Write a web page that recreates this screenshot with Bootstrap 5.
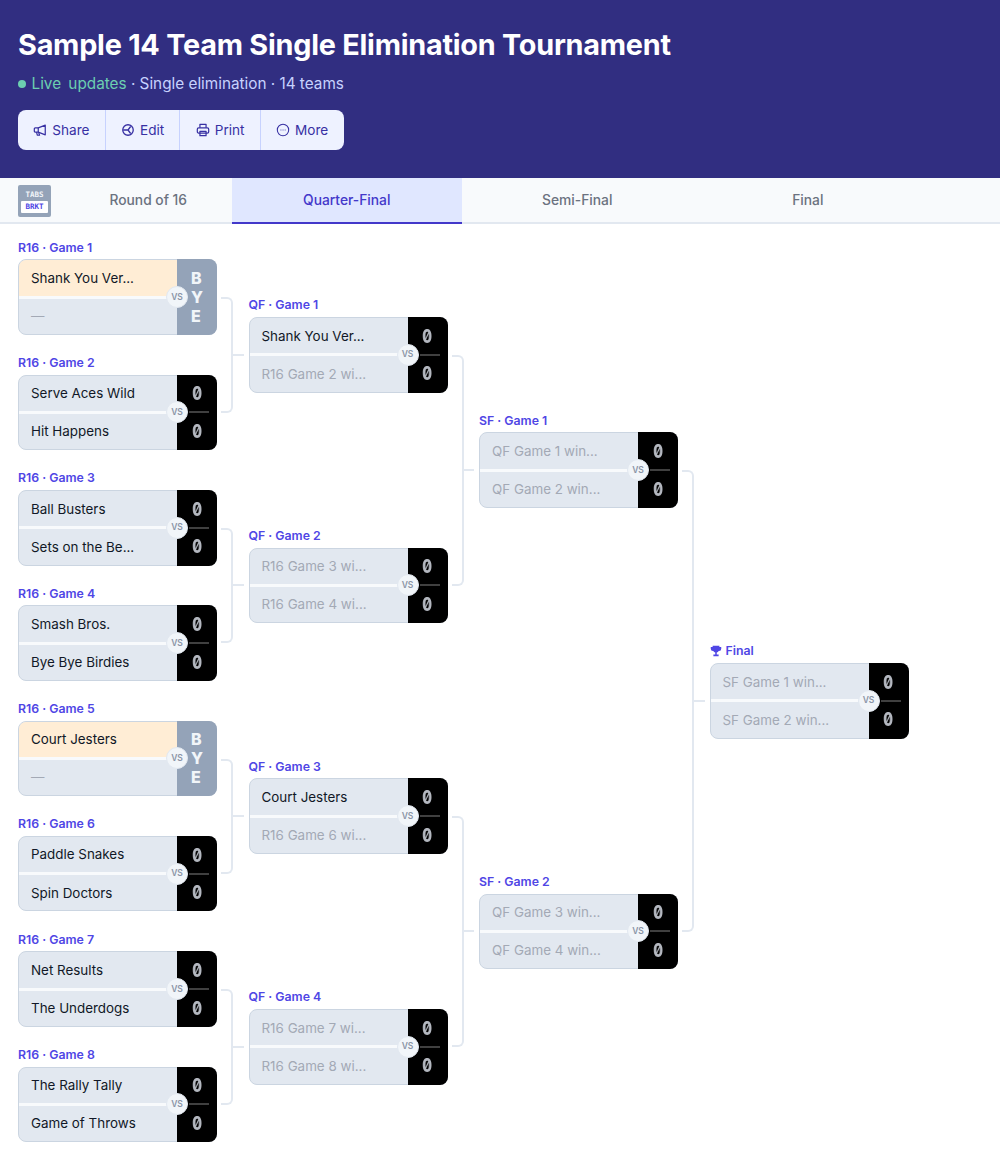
<!DOCTYPE html>
<html lang="en">
<head>
  <meta charset="UTF-8">
  <meta name="viewport" content="width=device-width, initial-scale=1">
  <title>Sample 14 Team Single Elimination Tournament</title>
  <link href="https://cdn.jsdelivr.net/npm/bootstrap@5.3.3/dist/css/bootstrap.min.css" rel="stylesheet">
  <style>
    body { font-family: Inter, "Liberation Sans", sans-serif; background: #fff; color: #111827; }

    .top-head { background: #312e81; height: 178px; padding: 26px 18px 0; }
    .top-head h1 { font-size: 28.8px; line-height: 38px; font-weight: 700; color: #fff; letter-spacing: -0.23px; margin: 0; }
    .sub-line { font-size: 15.3px; line-height: 24px; color: #c7d2fe; margin-top: 8px; }
    .live-dot { width: 8px; height: 8px; border-radius: 50%; background: #6ccfb0; display: inline-block; margin: 0 6px 0 -0.5px; vertical-align: 1.5px; }
    .live-txt { color: #6ccfb0; word-spacing: 3px; }
    .act-group { display: inline-flex; margin-top: 14px; background: #eef2ff; border-radius: 8px; height: 40px; overflow: hidden; }
    .act-btn { display: flex; align-items: center; gap: 5px; padding: 0 15.25px; height: 40px; font-size: 13.6px; color: #3730a3; background: transparent; border: 0; border-right: 1px solid #c7d2fe; }
    .act-btn:last-child { border-right: 0; }
    .act-btn svg { width: 14px; height: 14px; flex: none; }

    .tab-bar { display: flex; height: 46px; background: #f8fafc; border-bottom: 2px solid #e2e8f0; }
    .tab-cell { width: 230.5px; flex: none; display: flex; align-items: center; justify-content: center; font-size: 13.8px; font-weight: 500; color: #6b7280; height: 46px; padding-bottom: 1px; }
    .tab-cell.is-active { background: #e0e7ff; color: #4338ca; border-bottom: 2px solid #4338ca; padding-bottom: 0; }
    .tab-first { width: 231.5px; padding-left: 18px; justify-content: flex-start; }
    .tab-first span { flex: 1; text-align: center; padding-left: 14px; }
    .brkt-logo { width: 33px; height: 32px; flex: none; background: #94a3b8; border-radius: 2px; display: flex; flex-direction: column; align-items: center; padding-top: 4px; font-family: "DejaVu Sans Mono", monospace; font-size: 7.5px; line-height: 12px; font-weight: 700; color: #f1f5f9; }
    .brkt-logo b { display: block; background: #fff; color: #4f46e5; width: 27px; text-align: center; border-radius: 1px; }

    .bracket { display: flex; padding: 5.6px 0 0 18px; height: 941px; }
    .round-col { width: 230.5px; flex: none; display: flex; flex-direction: column; height: 922.67px; }
    .slot { flex: 1 1 0; display: flex; flex-direction: column; justify-content: center; position: relative; }
    .game-label { height: 19.6px; font-size: 12.3px; line-height: 15px; font-weight: 600; color: #4f46e5; }
    .game-label svg { width: 12px; height: 12px; vertical-align: -1.5px; margin-right: 4px; }
    .game-box { width: 199px; height: 75.6px; position: relative; display: flex; border-radius: 8px; border: 1px solid #cbd5e1; background: #e2e8f0; }
    .team-col { flex: 1; min-width: 0; display: flex; flex-direction: column; }
    .team-row { flex: 1; display: flex; align-items: center; padding-left: 12px; font-size: 13.4px; color: #111827; white-space: nowrap; }
    .team-row:first-child { border-bottom: 3px solid #f8fafc; border-top-left-radius: 7px; }
    .team-row.is-bye { background: #ffedd5; }
    .team-row.is-tbd { color: #a3a9b5; }
    .score-col { width: 40px; flex: none; background: #000; margin: -1px -1px -1px 0; border-radius: 0 8px 8px 0; display: flex; flex-direction: column; position: relative; font-family: Inter, "DejaVu Sans Mono", monospace; font-feature-settings: "zero", "tnum"; font-weight: 800; font-size: 19px; color: #b4b8c0; }
    .score-col i { flex: 1; display: flex; align-items: center; justify-content: center; font-style: normal; padding-top: 2px; }
    .score-col i span { display: block; transform: scaleX(.78); will-change: transform; }
    .score-col::after { content: ""; position: absolute; left: 12px; right: 8px; top: 50%; height: 2px; margin-top: -1px; background: #404040; }
    .score-col.is-bye { background: #94a3b8; color: #f1f5f9; font-family: Inter, sans-serif; font-weight: 800; font-size: 16px; line-height: 19px; align-items: center; justify-content: center; }
    .score-col.is-bye::after { display: none; }
    .vs-badge { position: absolute; right: 28px; top: 50%; width: 22px; height: 22px; margin-top: -11px; border-radius: 50%; background: #f1f5f9; border: 1px solid #e2e8f0; color: #8a94a6; font-size: 8.5px; font-weight: 600; display: flex; align-items: center; justify-content: center; z-index: 2; }

    /* connectors */
    .slot.has-next:nth-child(odd)::after { content: ""; position: absolute; left: 203px; width: 12px; top: calc(50% + 10px); bottom: 0; border-top: 2px solid #e2e8f0; border-right: 2px solid #e2e8f0; border-top-right-radius: 6px; }
    .slot.has-next:nth-child(even)::after { content: ""; position: absolute; left: 203px; width: 12px; top: 0; height: calc(50% + 10px); border-bottom: 2px solid #e2e8f0; border-right: 2px solid #e2e8f0; border-bottom-right-radius: 6px; }
    .has-prev .game-box::before { content: ""; position: absolute; left: -18px; width: 12px; top: 50%; margin-top: -1px; border-top: 2px solid #e2e8f0; }
  </style>
</head>
<body>

  <header class="top-head">
    <h1>Sample 14 Team Single Elimination Tournament</h1>
    <div class="sub-line"><span class="live-dot"></span><span class="live-txt">Live updates</span> · Single elimination · 14 teams</div>
    <div class="act-group">
      <button class="act-btn" type="button">
        <svg viewBox="0 0 16 16" fill="none" stroke="currentColor" stroke-width="1.4" stroke-linejoin="round"><path d="M14 2.5 6 5.5H2.5A1 1 0 0 0 1.5 6.5v3a1 1 0 0 0 1 1H6l8 3z"/><path d="M6 5.5v5M4 10.5l1 3.5h2.5L6.5 11"/></svg>Share</button>
      <button class="act-btn" type="button">
        <svg viewBox="0 0 16 16" fill="none" stroke="currentColor" stroke-width="1.5"><circle cx="8" cy="8" r="6"/><path d="M2.5 8H8l3-4M8 8l3 4"/></svg>Edit</button>
      <button class="act-btn" type="button">
        <svg viewBox="0 0 16 16" fill="none" stroke="currentColor" stroke-width="1.4" stroke-linejoin="round"><path d="M4.5 5.5V1.5h7v4"/><rect x="1.5" y="5.5" width="13" height="6" rx="1.5"/><rect x="4.5" y="9.5" width="7" height="5"/></svg>Print</button>
      <button class="act-btn" type="button">
        <svg viewBox="0 0 16 16" fill="none" stroke="currentColor" stroke-width="1.2"><circle cx="8" cy="8" r="6.5"/><path d="M5.2 8h.9M7.6 8h.9M10 8h.9" stroke-width="1.4"/></svg>More</button>
    </div>
  </header>

  <nav class="tab-bar">
    <div class="tab-cell tab-first"><div class="brkt-logo">TABS<b>BRKT</b></div><span>Round of 16</span></div>
    <div class="tab-cell is-active">Quarter-Final</div>
    <div class="tab-cell">Semi-Final</div>
    <div class="tab-cell">Final</div>
  </nav>

  <main class="bracket" id="bracket"></main>

  <script>
    const rondas = [
      [
        ["R16 · Game 1", "Shank You Ver...", "—", true],
        ["R16 · Game 2", "Serve Aces Wild", "Hit Happens"],
        ["R16 · Game 3", "Ball Busters", "Sets on the Be..."],
        ["R16 · Game 4", "Smash Bros.", "Bye Bye Birdies"],
        ["R16 · Game 5", "Court Jesters", "—", true],
        ["R16 · Game 6", "Paddle Snakes", "Spin Doctors"],
        ["R16 · Game 7", "Net Results", "The Underdogs"],
        ["R16 · Game 8", "The Rally Tally", "Game of Throws"]
      ],
      [
        ["QF · Game 1", "Shank You Ver...", "R16 Game 2 wi..."],
        ["QF · Game 2", "R16 Game 3 wi...", "R16 Game 4 wi..."],
        ["QF · Game 3", "Court Jesters", "R16 Game 6 wi..."],
        ["QF · Game 4", "R16 Game 7 wi...", "R16 Game 8 wi..."]
      ],
      [
        ["SF · Game 1", "QF Game 1 win...", "QF Game 2 win..."],
        ["SF · Game 2", "QF Game 3 win...", "QF Game 4 win..."]
      ],
      [
        ["Final", "SF Game 1 win...", "SF Game 2 win..."]
      ]
    ];

    const trofeu = '<svg viewBox="0 0 16 16" fill="currentColor"><path d="M3.5 1h9v1.5H15V5a3 3 0 0 1-3 3h-.4A4 4 0 0 1 9 10v2.5h2.5V15h-7v-2.5H7V10a4 4 0 0 1-2.6-2H4A3 3 0 0 1 1 5V2.5h2.5z"/></svg>';

    function classeTime(nome, bye) {
      if (bye) return "team-row is-bye";
      if (nome === "—" || / wi|win\.\.\./.test(nome)) return "team-row is-tbd";
      return "team-row";
    }

    const bracket = document.getElementById("bracket");
    rondas.forEach((jogos, r) => {
      const col = document.createElement("div");
      col.className = "round-col";
      jogos.forEach(j => {
        const bye = j[3] === true;
        const slot = document.createElement("div");
        slot.className = "slot" + (r < 3 ? " has-next" : "") + (r > 0 ? " has-prev" : "");
        slot.innerHTML =
          '<div class="game-label">' + (r === 3 ? trofeu : "") + j[0] + '</div>' +
          '<div class="game-box">' +
            '<div class="team-col">' +
              '<div class="' + classeTime(j[1], bye) + '">' + j[1] + '</div>' +
              '<div class="' + classeTime(j[2], false) + '">' + j[2] + '</div>' +
            '</div>' +
            (bye ? '<div class="score-col is-bye">B<br>Y<br>E</div>'
                 : '<div class="score-col"><i><span>0</span></i><i><span>0</span></i></div>') +
            '<div class="vs-badge">VS</div>' +
          '</div>';
        col.appendChild(slot);
      });
      bracket.appendChild(col);
    });
  </script>
  <script src="https://cdn.jsdelivr.net/npm/bootstrap@5.3.3/dist/js/bootstrap.bundle.min.js"></script>
</body>
</html>
